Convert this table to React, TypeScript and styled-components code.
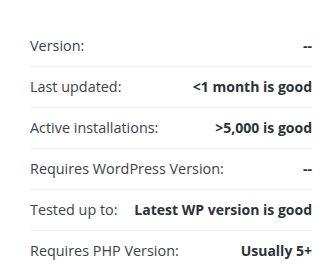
import React from "react";
import styled, { createGlobalStyle } from "styled-components";

const Global = createGlobalStyle`
  html, body { margin: 0; padding: 0; background: #fff; }
  body { font-family: "Open Sans", "Liberation Sans", sans-serif; }
`;

const Panel = styled.div`
  width: 336px;
  box-sizing: border-box;
  padding: 26px 24px 0 30px;
`;

const Row = styled.div<{ $last?: boolean }>`
  display: flex;
  justify-content: space-between;
  align-items: center;
  padding: 10px 0;
  font-size: 14px;
  line-height: 20px;
  height: 20px;
  border-bottom: ${(p) => (p.$last ? "none" : "1px solid #eeeeee")};
`;

const Label = styled.span`
  color: #3c434a;
  font-size: 14.4px;
`;

const Value = styled.span`
  color: #2c3338;
  font-weight: 700;
`;

const rows: [string, string][] = [
  ["Version:", "--"],
  ["Last updated:", "<1 month is good"],
  ["Active installations:", ">5,000 is good"],
  ["Requires WordPress Version:", "--"],
  ["Tested up to:", "Latest WP version is good"],
  ["Requires PHP Version:", "Usually 5+"],
];

export default function App() {
  return (
    <>
      <Global />
      <Panel>
        {rows.map(([l, v], i) => (
          <Row key={l} $last={i === rows.length - 1}>
            <Label>{l}</Label>
            <Value>{v}</Value>
          </Row>
        ))}
      </Panel>
    </>
  );
}
